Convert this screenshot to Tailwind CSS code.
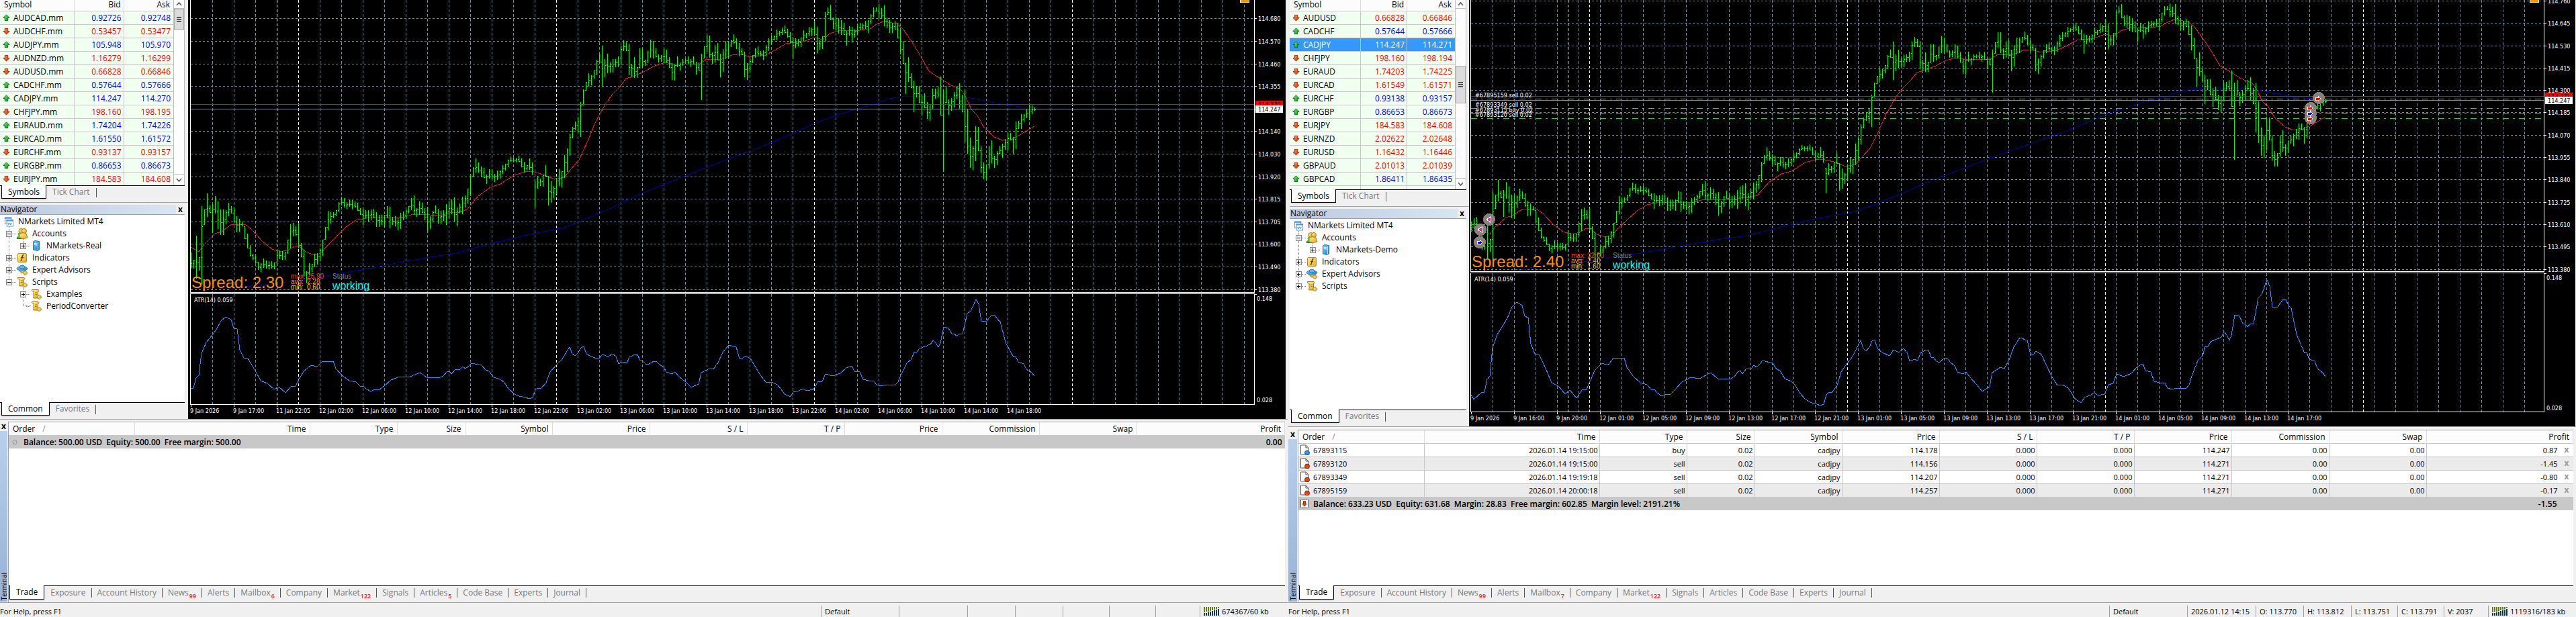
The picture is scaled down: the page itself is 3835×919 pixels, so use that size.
<!DOCTYPE html>
<html lang="en">

<head>
    <meta charset="UTF-8">
    <meta name="viewport" content="width=device-width, initial-scale=1.0">
    <title>NMarkets Limited MT4</title>
    <script src="https://cdn.jsdelivr.net/npm/@tailwindcss/browser@4"></script>
</head>

<body class="bg-[#f0f0f0] text-black text-[12px] leading-[16px] font-['Open_Sans',sans-serif]">
    <!-- Shared icons -->
    <svg class="absolute size-0" aria-hidden="true">
        <defs>
            <linearGradient id="g-up" x1="0" y1="0" x2="1" y2="1"><stop offset="0" stop-color="#7df07d"/><stop offset="1" stop-color="#0a8a1a"/></linearGradient>
            <linearGradient id="g-down" x1="0" y1="0" x2="1" y2="1"><stop offset="0" stop-color="#ff9a6a"/><stop offset="1" stop-color="#c22a00"/></linearGradient>
            <linearGradient id="g-gold" x1="0" y1="0" x2="1" y2="1"><stop offset="0" stop-color="#fff0a0"/><stop offset="1" stop-color="#e0a820"/></linearGradient>
            <linearGradient id="g-blue" x1="0" y1="0" x2="1" y2="1"><stop offset="0" stop-color="#7fd4ff"/><stop offset="1" stop-color="#1078d0"/></linearGradient>
        </defs>
        <symbol id="i-up" viewBox="0 0 12 12"><path d="M6 1 11 6H8.500V10.500H3.500V6H1Z" fill="url(#g-up)" stroke="#0a6a18"/></symbol>
        <symbol id="i-down" viewBox="0 0 12 12"><path d="M6 11 1 6H3.500V1.500H8.500V6H11Z" fill="url(#g-down)" stroke="#9a2600"/></symbol>
        <symbol id="i-root" viewBox="0 0 16 16"><rect x="1.500" y="1.500" width="10" height="10" fill="#fff" stroke="#4a9ae0"/><path d="M1 2.500H12" stroke="#4a9ae0" stroke-width="2"/><path d="M3 7 4.500 5 6 8" fill="none" stroke="#4a7ad0"/><rect x="4.500" y="5.500" width="10" height="10" fill="#fff" stroke="#4a9ae0"/><path d="M4 6.500H15" stroke="#4a9ae0" stroke-width="2"/><path d="M6 10 7.500 13 9 10 10.500 13 12 10" fill="none" stroke="#4a7ad0"/></symbol>
        <symbol id="i-accounts" viewBox="0 0 18 16"><circle cx="5" cy="9" r="2.500" fill="#50d030"/><path d="M1 15.500C1 11 9 11 9 15.500Z" fill="#30c020" stroke="#209010"/><circle cx="7.500" cy="4" r="3.500" fill="url(#g-gold)" stroke="#a87a10"/><circle cx="12" cy="4" r="3.500" fill="url(#g-gold)" stroke="#a87a10"/><path d="M5 14V9Q9 5 15 8L17 14Q11 17 5 14Z" fill="url(#g-gold)" stroke="#a87a10"/></symbol>
        <symbol id="i-server" viewBox="0 0 16 16"><path d="M3.500 2 6 .5 12.500 1.500V14L10 15.500 3.500 14Z" fill="url(#g-blue)" stroke="#1878c8"/><path d="M5 4.500 9 5M5 6.500 9 7" stroke="#fff"/><path d="M10.500 3V15" stroke="#bfe8ff"/></symbol>
        <symbol id="i-indicator" viewBox="0 0 16 16"><rect x="1.500" y="1.500" width="13" height="13" rx="1.500" fill="url(#g-gold)" stroke="#b88a20"/><path d="M10.500 4C8.500 3 8.500 5 8 7.500S7 13 5.500 12M6 7.500H10" fill="none" stroke="#5a4000" stroke-width="1.300"/></symbol>
        <symbol id="i-expert" viewBox="0 0 18 16"><path d="M4 8Q10 14 14 8L15 12 8 13Z" fill="url(#g-gold)" stroke="#b88a20"/><ellipse cx="9" cy="6" rx="8" ry="3" fill="url(#g-blue)" stroke="#2a80b8"/><path d="M5 5Q5 1 9 1T13 5Q9 7 5 5Z" fill="#6ab8e8" stroke="#2a80b8"/><path d="M13.500 9 17 12.500 13.500 16 10 12.500Z" fill="url(#g-gold)" stroke="#a87a10"/></symbol>
        <symbol id="i-script" viewBox="0 0 16 16"><path d="M1.500 1.500H11Q12.500 2.500 11.500 4H10.500V11H12V14H4Q2.500 13 4 11.500V4H2.500Q1 3 1.500 1.500Z" fill="url(#g-gold)" stroke="#a87a10"/><path d="M6 6H9M6 8.500H9" stroke="#a87a10"/><path d="M12.500 9 16 12.500 12.500 16 9 12.500Z" fill="url(#g-gold)" stroke="#a87a10"/></symbol>
        <symbol id="i-buy" viewBox="0 0 14 16"><path d="M.5 1H8L12 5V15H.5Z" fill="#fff" stroke="#555"/><path d="M8 1V5H12" fill="none" stroke="#555"/><circle cx="10" cy="12.500" r="3.500" fill="#2a9ae8" stroke="#1060a0"/></symbol>
        <symbol id="i-sell" viewBox="0 0 14 16"><path d="M.5 1H8L12 5V15H.5Z" fill="#fff" stroke="#555"/><path d="M8 1V5H12" fill="none" stroke="#555"/><circle cx="10" cy="12.500" r="3.500" fill="#e04a18" stroke="#902000"/></symbol>
        <symbol id="i-loss" viewBox="0 0 14 16"><rect x=".5" y="1.500" width="11" height="13" rx="1" fill="#fff" stroke="#555"/><path d="M6 12 3 8.500H4.500V4.500H7.500V8.500H9Z" fill="#e04a18" stroke="#a02a00"/></symbol>
        <symbol id="i-flat" viewBox="0 0 14 16"><circle cx="6" cy="8.500" r="3" fill="#ddd" stroke="#888"/><path d="M4 10.500 8 6.500" stroke="#888"/></symbol>
        <symbol id="i-traffic" viewBox="0 0 23 13"><path d="M0 0h2v8h-2zM3 0h2v7h-2zM6 0h2v7h-2zM9 0h2v6h-2zM12 0h2v5h-2zM15 0h2v4h-2zM18 0h2v3h-2zM21 0h2v2h-2z" fill="#6b7a1a"/><path d="M0 9h2v4h-2zM3 9h2v4h-2zM6 8h2v5h-2zM9 7h2v6h-2zM12 6h2v7h-2zM15 5h2v8h-2zM18 4h2v9h-2zM21 3h2v10h-2z" fill="#123c58"/></symbol>
    </svg>

    <main id="desk" class="flex gap-px h-screen overflow-hidden"></main>

    <script>
        // High/low of every bar as chart offsets, one pair per bar
        const BARS = [
            355,371, 350,366, 347,368, 370,385,
            376,400, 387,400, 351,415, 383,403, 307,423, 312,335, 288,323, 306,317, 304,347, 292,318,
            299,341, 312,350, 312,350, 313,333, 302,322, 307,318, 310,331, 322,346, 326,345, 330,337,
            337,356, 348,370, 365,382, 378,387, 380,392, 390,402, 392,405, 385,399, 388,400, 389,401,
            389,400, 391,401, 371,391, 373,386, 374,387, 375,387, 357,378, 334,370, 332,352, 337,351,
            332,370, 362,383, 372,412, 404,422, 392,410, 393,405, 378,398, 377,394, 370,389, 357,381,
            338,357, 314,343, 316,333, 316,325, 313,322, 301,316, 293,306, 295,309, 301,311, 298,308,
            298,312, 300,310, 302,314, 310,320, 310,335, 313,325, 313,330, 312,328, 311,325, 316,338,
            320,338, 320,335, 320,338, 307,325, 308,340, 323,335, 322,337, 325,343, 317,341, 315,328,
            312,325, 307,318, 295,313, 291,320, 310,323, 300,320, 302,318, 310,328, 308,345, 322,341,
            314,331, 306,318, 311,333, 314,333, 313,329, 304,335, 299,326, 297,319, 294,330, 309,337,
            303,318, 293,319, 291,309, 281,303, 259,292, 249,263, 236,257, 242,257, 248,264, 250,265,
            260,274, 252,266, 252,268, 259,271, 254,268, 254,266, 246,259, 244,254, 238,249, 233,241,
            235,242, 235,242, 232,241, 236,249, 241,257, 246,254, 236,253, 242,260, 269,310, 262,281,
            266,277, 261,278, 246,263, 262,306, 270,302, 277,295, 265,289, 252,277, 255,279, 231,265,
            221,256, 199,232, 189,206, 181,194, 174,197, 152,204, 133,157, 122,135, 109,129, 112,127,
            105,118, 89,112, 80,93, 68,129, 88,115, 80,109, 93,108, 88,108, 88,100, 84,100,
            68,97, 60,76, 63,76, 66,112, 96,114, 85,116, 100,116, 72,102, 72,100, 89,98,
            76,94, 59,86, 61,87, 72,85, 81,93, 82,92, 72,94, 74,94, 85,101, 94,119,
            96,120, 84,100, 93,105, 88,98, 88,94, 84,95, 88,100, 84,96, 92,111, 93,105,
            80,149, 69,87, 52,77, 53,86, 78,95, 67,93, 64,90, 80,115, 73,107, 61,88,
            61,86, 60,70, 51,65, 57,73, 64,84, 72,82, 77,115, 94,119, 88,107, 82,94,
            72,86, 69,83, 76,84, 75,89, 67,84, 57,76, 53,66, 53,60, 44,60, 46,53,
            41,52, 38,50, 43,56, 48,64, 55,87, 57,72, 58,69, 56,70, 45,61, 49,57,
            40,54, 41,53, 31,52, 40,79, 59,74, 54,73, 18,61, 11,22, 7,30, 26,43,
            25,45, 27,50, 30,52, 34,52, 46,68, 39,53, 40,63, 44,56, 35,52, 34,45,
            35,44, 31,43, 30,49, 21,36, 11,26, 11,17, 6,28, 12,28, 8,39, 26,42,
            30,49, 34,49, 31,44, 34,57, 42,81, 61,95, 94,140, 85,122, 109,131, 120,167,
            128,145, 128,153, 142,172, 139,161, 152,177, 155,180, 132,163, 132,147, 129,145, 114,172,
            133,256, 129,153, 148,171, 146,165, 137,160, 129,147, 124,162, 141,167, 134,212, 163,229,
            205,250, 217,253, 188,240, 189,225, 217,257, 242,267, 245,267, 217,251, 209,243, 232,250,
            225,246, 217,230, 214,235, 207,223, 198,224, 198,209, 204,230, 181,222, 180,192, 170,192,
            170,181, 162,176, 156,179, 157,170, 160,165
        ];

        const FAST_MA = [268,362, 284,368, 296,375, 303,365, 320,348, 330,345, 345,334, 365,334, 375,342, 390,359, 405,371, 418,375, 430,372, 440,366, 446,367, 455,375, 468,380, 478,377, 487,366, 500,353, 515,338, 530,328, 545,325, 575,324, 600,324, 615,319, 640,320, 655,321, 670,317, 685,316, 695,312, 712,292, 730,279, 745,274, 765,261, 785,255, 795,256, 812,261, 825,267, 840,264, 850,252, 862,238, 875,210, 885,185, 900,157, 912,140, 922,130, 932,117, 945,113, 960,106, 975,98, 990,93, 1005,96, 1042,95, 1052,88, 1075,88, 1090,82, 1105,80, 1115,85, 1140,82, 1155,74, 1170,65, 1195,62, 1212,56, 1225,59, 1235,50, 1248,46, 1265,45, 1280,45, 1295,43, 1305,36, 1315,32, 1335,35, 1345,44, 1360,66, 1372,86, 1383,106, 1400,117, 1414,126, 1430,133, 1437,143, 1446,163, 1455,172, 1465,190, 1480,204, 1490,208, 1505,208, 1520,200, 1540,188];
        const SLOW_MA = [330,435, 365,427, 405,423, 440,418, 480,412, 520,405, 560,398, 600,390, 640,383, 680,377, 730,363, 780,351, 840,339, 860,331, 905,312, 960,286, 1000,270, 1050,250, 1100,231, 1150,212, 1212,184, 1250,170, 1280,161, 1300,156, 1320,148, 1345,143, 1430,143, 1460,149, 1490,155, 1520,159, 1540,159];
        const ATR = [268,581, 272,587, 284,578, 288,578, 292,563, 296,559, 300,526, 307,510, 313,503, 322,491, 329,478, 336,472, 344,476, 348,489, 353,490, 357,521, 363,533, 369,534, 374,542, 380,552, 388,567, 398,571, 408,580, 415,576, 425,585, 433,576, 440,575, 445,565, 452,553, 463,544, 472,546, 480,538, 496,538, 500,549, 509,559, 520,567, 530,569, 537,576, 541,575, 545,579, 552,583, 558,580, 565,580, 572,575, 582,566, 595,561, 608,562, 625,555, 635,562, 640,562, 653,563, 660,560, 665,554, 669,553, 672,557, 677,551, 685,550, 689,546, 693,549, 698,545, 702,541, 717,544, 723,551, 728,553, 735,562, 745,565, 751,570, 757,579, 766,587, 773,590, 783,592, 788,594, 793,592, 797,581, 801,578, 805,579, 813,570, 819,554, 828,544, 836,536, 843,525, 848,517, 852,527, 856,530, 861,525, 865,518, 869,516, 873,527, 880,531, 891,535, 897,528, 905,531, 912,527, 917,531, 921,542, 928,539, 933,541, 937,532, 945,528, 949,528, 953,537, 957,538, 961,542, 965,543, 973,538, 978,539, 982,543, 988,547, 992,554, 1000,557, 1005,554, 1011,561, 1021,569, 1029,577, 1040,572, 1044,555, 1056,549, 1062,550, 1069,540, 1076,525, 1085,514, 1096,517, 1101,534, 1105,534, 1109,530, 1117,534, 1125,547, 1132,559, 1141,570, 1149,569, 1157,573, 1163,580, 1168,587, 1175,590, 1177,590, 1181,584, 1189,582, 1196,579, 1201,582, 1211,580, 1217,569, 1224,568, 1229,557, 1240,560, 1251,556, 1260,548, 1268,545, 1272,553, 1280,554, 1285,565, 1293,567, 1301,568, 1305,573, 1312,575, 1318,573, 1333,573, 1337,569, 1341,559, 1350,541, 1357,535, 1361,524, 1365,524, 1369,519, 1385,513, 1389,507, 1393,511, 1397,517, 1400,511, 1405,487, 1412,489, 1417,497, 1421,497, 1424,501, 1428,497, 1433,497, 1440,467, 1445,463, 1449,455, 1453,446, 1457,453, 1461,478, 1469,478, 1473,473, 1477,469, 1481,469, 1485,476, 1489,479, 1497,510, 1505,525, 1509,532, 1512,531, 1516,539, 1524,542, 1528,550, 1536,555, 1540,560];

        const GRID = '#778899';
        const icon = (id, cls) => `<svg class="${cls} shrink-0"><use href="#i-${id}"/></svg>`;

        const WINDOWS = [
            {
                sidebar: 'w-[280px]', inset: '', list: 'w-[275px]', rowsHeight: 'h-[276px]', cols: [110, 74, 74],
                thumb: 'h-[32px]', thumbTop: '',
                symbols: [['AUDCAD.mm', '0.92726', '0.92748', 1], ['AUDCHF.mm', '0.53457', '0.53477', 0], ['AUDJPY.mm', '105.948', '105.970', 1], ['AUDNZD.mm', '1.16279', '1.16299', 0], ['AUDUSD.mm', '0.66828', '0.66846', 0], ['CADCHF.mm', '0.57644', '0.57666', 1], ['CADJPY.mm', '114.247', '114.270', 1], ['CHFJPY.mm', '198.160', '198.195', 0], ['EURAUD.mm', '1.74204', '1.74226', 1], ['EURCAD.mm', '1.61550', '1.61572', 1], ['EURCHF.mm', '0.93137', '0.93157', 0], ['EURGBP.mm', '0.86653', '0.86673', 1], ['EURJPY.mm', '184.583', '184.608', 0]],
                tree: [[1, '-', 'accounts', 'Accounts'], [2, '+', 'server', 'NMarkets-Real'], [1, '+', 'indicator', 'Indicators'], [1, '+', 'expert', 'Expert Advisors'], [1, '-', 'script', 'Scripts'], [2, '+', 'script', 'Examples'], [2, '', 'script', 'PeriodConverter']],
                branches: '<span class="absolute left-[34px] top-[36px] h-[10px] border-l border-dotted border-[#888]"></span><span class="absolute left-[34px] top-[108px] h-[28px] w-[12px] border-l border-b border-dotted border-[#888]"></span>',
                chartPad: 'pl-[3px] mr-[3px]', atrHeight: 'h-[166px]', panelGap: 'h-[4px]',
                shift: 0, priceMap: y => y, atrMap: y => y - 438, gridX: 32, ask: 155, bid: 162,
                levels: [[27, '114.680'], [61, '114.570'], [95, '114.460'], [128, '114.355'], [162, ''], [195, '114.140'], [229, '114.030'], [263, '113.920'], [296, '113.815'], [330, '113.705'], [363, '113.600'], [397, '113.490'], [431, '113.380']],
                askText: '114.270', bidText: '114.247', atrLabels: [7, 157],
                times: ['9 Jan 2026', '9 Jan 17:00', '11 Jan 22:05', '12 Jan 02:00', '12 Jan 06:00', '12 Jan 10:00', '12 Jan 14:00', '12 Jan 18:00', '12 Jan 22:06', '13 Jan 02:00', '13 Jan 06:00', '13 Jan 10:00', '13 Jan 14:00', '13 Jan 18:00', '13 Jan 22:06', '14 Jan 02:00', '14 Jan 06:00', '14 Jan 10:00', '14 Jan 14:00', '14 Jan 18:00'],
                spread: '2.30', stats: ['25.90', '2.28', '0.60'],
                orders: [], trades: [],
                terminal: 'h-[269px]', strip: 'w-[11px]',
                summary: ['flat', 'Balance: 500.00 USD  Equity: 500.00  Free margin: 500.00', '0.00', 'pr-[4px]'],
                tabs: ['Trade', 'Exposure', 'Account History', 'News|99', 'Alerts', 'Mailbox|6', 'Company', 'Market|122', 'Signals', 'Articles|5', 'Code Base', 'Experts', 'Journal'],
                status: ['Default', '', '', '', '', '', ''], traffic: '674367/60 kb'
            },
            {
                sidebar: 'w-[269px]', inset: 'pl-[2px]', list: 'w-[263px]', rowsHeight: 'h-[282px]', cols: [105, 69, 71],
                thumb: 'h-[56px]', thumbTop: 'mt-[85px]',
                symbols: [['AUDUSD', '0.66828', '0.66846', 0], ['CADCHF', '0.57644', '0.57666', 1], ['CADJPY', '114.247', '114.271', 1, true], ['CHFJPY', '198.160', '198.194', 0], ['EURAUD', '1.74203', '1.74225', 0], ['EURCAD', '1.61549', '1.61571', 0], ['EURCHF', '0.93138', '0.93157', 1], ['EURGBP', '0.86653', '0.86673', 1], ['EURJPY', '184.583', '184.608', 0], ['EURNZD', '2.02622', '2.02648', 0], ['EURUSD', '1.16432', '1.16446', 0], ['GBPAUD', '2.01013', '2.01039', 0], ['GBPCAD', '1.86411', '1.86435', 1], ['GBPCHF', '1.07470', '1.07495', 0]],
                tree: [[1, '-', 'accounts', 'Accounts'], [2, '+', 'server', 'NMarkets-Demo'], [1, '+', 'indicator', 'Indicators'], [1, '+', 'expert', 'Expert Advisors'], [1, '+', 'script', 'Scripts']],
                branches: '<span class="absolute left-[34px] top-[36px] h-[10px] border-l border-dotted border-[#888]"></span>',
                chartPad: 'pl-[2px] mr-px', atrHeight: 'h-[208px]', panelGap: 'h-[5px]',
                shift: 16, priceMap: y => Math.round(y * 0.9327 - 1), atrMap: y => Math.round(10 + (y - 446) * 1.265), gridX: 32, ask: 143, bid: 149,
                levels: [[1, '114.760'], [34, '114.645'], [68, '114.530'], [101, '114.415'], [134, '114.300'], [167, '114.185'], [201, '114.070'], [234, '113.955'], [267, '113.840'], [301, '113.725'], [334, '113.610'], [367, '113.495'], [401, '113.380']],
                askText: '114.271', bidText: '114.247', atrLabels: [7, 200],
                times: ['9 Jan 2026', '9 Jan 16:00', '9 Jan 20:00', '12 Jan 01:00', '12 Jan 05:00', '12 Jan 09:00', '12 Jan 13:00', '12 Jan 17:00', '12 Jan 21:00', '13 Jan 01:00', '13 Jan 05:00', '13 Jan 09:00', '13 Jan 13:00', '13 Jan 17:00', '13 Jan 21:00', '14 Jan 01:00', '14 Jan 05:00', '14 Jan 09:00', '14 Jan 13:00', '14 Jan 17:00'],
                spread: '2.40', stats: ['32.50', '2.40', '1.60'],
                orders: [[147, '#67895159 sell 0.02'], [161, '#67893349 sell 0.02'], [169, '#67893115 buy 0.02'], [176, '#67893120 sell 0.02']],
                trades: [['67893115', '2026.01.14 19:15:00', 'buy', '114.178', '114.247', '0.87'], ['67893120', '2026.01.14 19:15:00', 'sell', '114.156', '114.271', '-1.45'], ['67893349', '2026.01.14 19:19:18', 'sell', '114.207', '114.271', '-0.80'], ['67895159', '2026.01.14 20:00:18', 'sell', '114.257', '114.271', '-0.17']],
                terminal: 'h-[257px]', strip: 'w-[13px]',
                summary: ['loss', 'Balance: 633.23 USD  Equity: 631.68  Margin: 28.83  Free margin: 602.85  Margin level: 2191.21%', '-1.55', 'pr-[24px]'],
                tabs: ['Trade', 'Exposure', 'Account History', 'News|99', 'Alerts', 'Mailbox|7', 'Company', 'Market|122', 'Signals', 'Articles', 'Code Base', 'Experts', 'Journal'],
                status: ['Default', '2026.01.12 14:15', 'O: 113.770', 'H: 113.812', 'L: 113.751', 'C: 113.791', 'V: 2037'], traffic: '1119316/183 kb'
            }
        ];

        const DAYS = [128, 160, 544, 928, 1312]; // session separators

        function verticals(w, h) {
            let d = '';
            for (let k = 0; k < 49; k++) {
                const x = w.gridX + 32 * k;
                if (!DAYS.some(day => day + w.shift === x)) d += `M${x}.5 0V${h}`;
            }
            return `<path d="${d}" stroke="${GRID}" stroke-dasharray="4 3"/>
                <path d="${DAYS.map(x => `M${x + w.shift}.5 0V${h}`).join('')}" stroke="#fff" stroke-dasharray="4 3"/>`;
        }

        function line(points, w, map, color) {
            const out = [];
            for (let i = 0; i < points.length; i += 2) {
                out.push(`${points[i] - 284 + w.shift},${map(points[i + 1])}`);
            }
            return `<polyline points="${out.join(' ')}" fill="none" stroke="${color}"/>`;
        }

        function bars(w) {
            const n = BARS.length / 2;
            const mid = i => (BARS[2 * i] + BARS[2 * i + 1]) / 2;
            let d = '', prev = null;
            for (let i = 0; i < n; i++) {
                const x = 4 * (i - 4) + w.shift;
                const hi = w.priceMap(BARS[2 * i]), lo = w.priceMap(BARS[2 * i + 1]);
                const next = i < n - 1 ? (mid(i) + 2 * mid(i + 1)) / 3 : mid(i);
                const close = Math.min(lo - 1, Math.max(hi, Math.round(w.priceMap(next))));
                const open = prev === null ? close : Math.min(lo - 1, Math.max(hi, prev));
                d += `M${x}.5 ${hi}V${lo}M${x - 1} ${open}.5H${x}M${x + 1} ${close}.5H${x + 2}`;
                prev = close;
            }
            return `<path d="${d}" fill="none" stroke="#00ff00"/>`;
        }

        function markers() {
            const disc = (x, y) => `<circle cx="${x}" cy="${y}" r="9" fill="#8c8078"/>`;
            const left = (x, y) => `<path d="M${x - 4} ${y} ${x + 2} ${y - 4}V${y + 4}Z" fill="#ff1493" stroke="#fff"/>`;
            const right = (x, y, c) => `<path d="M${x - 4} ${y - 2}H${x}V${y - 4}L${x + 4} ${y} ${x} ${y + 4}V${y + 2}H${x - 4}Z" fill="${c}" stroke="#fff"/>`;
            return `<path d="M0 334 20 328M14 361 26 328" stroke="#00f" stroke-dasharray="4 3"/>
                <path d="M0 337 14 343M0 344 14 342" stroke="#f00" stroke-dasharray="3 3"/>
                ${disc(27, 327)}${disc(14, 342)}${disc(13, 361)}
                ${left(27, 327)}${left(14, 342)}${right(13, 361, '#00f')}
                ${disc(1262, 146)}${disc(1250, 161)}${disc(1250, 169)}${disc(1250, 176)}
                ${right(1261, 147, '#f00')}${right(1249, 161, '#f00')}${right(1249, 169, '#00f')}${right(1249, 177, '#f00')}`;
        }

        function priceSvg(w) {
            return `<svg class="absolute inset-0 w-full h-full text-[9px]" shape-rendering="crispEdges">
                ${verticals(w, 440)}
                <path d="${w.levels.map(l => `M0 ${l[0]}.5H9999`).join('')}" stroke="${GRID}" stroke-dasharray="3 3"/>
                ${line(SLOW_MA, w, w.priceMap, '#0000a0')}
                ${line(FAST_MA, w, w.priceMap, '#dc143c')}
                ${bars(w)}
                <path d="M0 ${w.ask}.5H9999" stroke="#f00"/>
                <path d="${w.orders.map(o => `M0 ${o[0]}.5H1594`).join('')}" stroke="#32cd32" stroke-dasharray="9 6 3 6"/>
                <path d="M0 ${w.bid}.5H9999" stroke="${GRID}"/>
                ${w.orders.length ? markers() : ''}
                ${w.orders.map(o => `<text x="6" y="${o[0] - 2}" fill="#fff">${o[1]}</text>`).join('')}
            </svg>`;
        }

        function chart(w) {
            return `
            <section class="flex-1 min-w-0 flex flex-col bg-black text-white font-['DejaVu_Sans_Condensed','Open_Sans',sans-serif] ${w.chartPad}">
                <div class="flex flex-1 min-h-0 mb-px">
                    <div class="relative flex-1 overflow-hidden border-l border-r border-b border-white">
                        ${priceSvg(w)}
                        <span class="absolute right-[7px] top-0 w-[14px] h-[4px] bg-[#ff9800] border-x border-b border-white"></span>
                        <div class="absolute left-px bottom-0 flex items-end font-['Liberation_Sans',sans-serif]">
                            <span class="text-[24px] leading-[27px] w-[148px] whitespace-nowrap pb-px text-[#ff8c00]">Spread: ${w.spread}</span>
                            <div class="grid grid-cols-[24px_38px] text-[10px] leading-[8px] pb-[3px]">
                                <span class="text-[#ff4500]">max:</span><span class="text-[#ff4500]">${w.stats[0]}</span>
                                <span class="text-[#ff8c00]">avg:</span><span class="text-[#ff8c00]">${w.stats[1]}</span>
                                <span class="text-[#e8d800]">min:</span><span class="text-[#e8d800]">${w.stats[2]}</span>
                            </div>
                            <div class="flex flex-col pb-px">
                                <span class="text-[10px] leading-[10px] text-[#808080]">Status</span>
                                <span class="text-[16px] leading-[17px] text-[#00ffff]">working</span>
                            </div>
                        </div>
                    </div>
                    <svg class="w-[46px] h-full text-[9px] shrink-0" shape-rendering="crispEdges">
                        ${w.levels.map(l => `<path d="M0 ${l[0]}.5H3" stroke="#fff"/><text x="5" y="${l[0] + 4}" fill="#fff">${l[1]}</text>`).join('')}
                        <path d="M1 ${w.ask - 5}H42V${w.ask + 6}H1Z" fill="#f00"/><text x="5" y="${w.ask + 4}" fill="#000">${w.askText}</text>
                        <path d="M1 ${w.bid - 5}H42V${w.bid + 6}H1Z" fill="#fff"/><text x="5" y="${w.bid + 4}" fill="#000">${w.bidText}</text>
                    </svg>
                </div>
                <div class="flex shrink-0 ${w.atrHeight}">
                    <div class="relative flex-1 overflow-hidden border border-white">
                        <svg class="absolute inset-0 w-full h-full" shape-rendering="crispEdges">
                            ${verticals(w, 300)}
                            ${line(ATR, w, w.atrMap, '#1e90ff')}
                        </svg>
                        <span class="absolute left-[5px] top-[3px] text-[9px] leading-[12px]">ATR(14) 0.059</span>
                    </div>
                    <svg class="w-[46px] h-full text-[9px] shrink-0">
                        <path d="M0 1.500H3" stroke="#fff"/>
                        <text x="3" y="${w.atrLabels[0] + 4}" fill="#fff">0.148</text>
                        <text x="3" y="${w.atrLabels[1] + 5}" fill="#fff">0.028</text>
                    </svg>
                </div>
                <div class="flex h-[21px] shrink-0 text-[9px] leading-[12px]">
                    ${w.times.map(t => `<span class="w-[64px] shrink-0 pt-[3px] relative whitespace-nowrap before:absolute before:left-px before:top-0 before:h-[3px] before:w-px before:bg-white">${t}</span>`).join('')}
                </div>
            </section>`;
        }

        function pageTabs(active, other) {
            return `
            <div class="flex items-start h-[25px] pl-[2px] border-t border-black">
                <button class="-mt-px h-[20px] px-[9px] bg-white border-x border-b border-black shadow">${active}</button>
                <button class="h-[18px] mx-[9px] text-[#787878]">${other}</button>
                <span class="h-[14px] mt-[3px] border-l border-[#555]"></span>
            </div>`;
        }

        function marketWatch(w) {
            const rows = w.symbols.map(([name, bid, ask, up, selected]) => {
                const tone = selected ? 'text-white' : up ? 'text-[#0000ff]' : 'text-[#ff0000]';
                return `<tr class="h-[20px] border-b border-[#c8c8c8] ${selected ? 'bg-[#3399ff] text-white' : 'bg-[#f0fff0]'}">
                    <td class="pl-[4px] border-r border-[#c8c8c8]"><span class="flex items-center gap-[5px]">${icon(up ? 'up' : 'down', 'size-[11px]')}${name}</span></td>
                    <td class="pr-[3px] text-right border-r border-[#c8c8c8] ${tone}">${bid}</td>
                    <td class="pr-[4px] text-right ${tone}">${ask}</td>
                </tr>`;
            }).join('');
            return `
            <section class="${w.list}">
                <div class="flex overflow-hidden ${w.rowsHeight}">
                    <table class="table-fixed border-collapse w-full self-start leading-[15px]">
                        <colgroup>${w.cols.map(c => `<col style="width:${c}px">`).join('')}</colgroup>
                        <thead><tr class="h-[16px] bg-[#fcfcfc] border-b border-[#c8c8c8] leading-[14px]">
                            <th class="pl-[6px] pb-px font-normal text-left border-r border-[#ddd]">Symbol</th>
                            <th class="pr-[4px] pb-px font-normal text-right border-r border-[#ddd]">Bid</th>
                            <th class="pr-[5px] pb-px font-normal text-right">Ask</th>
                        </tr></thead>
                        <tbody>${rows}</tbody>
                    </table>
                    <div class="w-[17px] shrink-0 flex flex-col bg-[#fdfdfd] border-x border-[#c0c0c0]">
                        <button aria-label="Scroll up" class="h-[13px] shrink-0 border-b border-[#c0c0c0] flex justify-center"><svg class="w-[9px] h-[10px]"><path d="M1 8 4.500 4 8 8" fill="none" stroke="#555" stroke-width="1.500"/></svg></button>
                        <div class="${w.thumb} ${w.thumbTop} shrink-0 bg-[#dcdcdc] border border-[#aaa] flex items-center justify-center"><svg class="w-[7px] h-[8px]" shape-rendering="crispEdges"><path d="M0 1H7M0 4H7M0 7H7" stroke="#555" stroke-width="2"/></svg></div>
                        <button aria-label="Scroll down" class="h-[17px] mt-auto shrink-0 border-t border-[#c0c0c0] flex items-center justify-center"><svg class="w-[9px] h-[8px]"><path d="M1 2 4.500 6 8 2" fill="none" stroke="#555" stroke-width="1.500"/></svg></button>
                    </div>
                </div>
                ${pageTabs('Symbols', 'Tick Chart')}
            </section>`;
        }

        function navigatorPanel(w) {
            const rows = w.tree.map(([level, box, id, label]) => `
                <li class="h-[18px] flex items-center ${level === 1 ? 'pl-[9px]' : 'pl-[30px]'}">
                    ${box ? `<button class="size-[9px] bg-[#eee] border border-[#888] relative z-10 flex items-center justify-center" aria-label="Toggle ${label}"><svg class="size-[5px]" shape-rendering="crispEdges"><path d="M0 2.500H5${box === '+' ? 'M2.500 0V5' : ''}" stroke="#000"/></svg></button>` : '<span class="w-[9px]"></span>'}
                    <span class="w-[6px] border-t border-dotted border-[#888]"></span>
                    ${icon(id, 'w-[18px] h-[16px]')}
                    <span class="pl-[6px] whitespace-nowrap">${label}</span>
                </li>`).join('');
            return `
            <section class="flex-1 min-h-0 flex flex-col border-t border-[#a0a0a0] pt-[2px]">
                <header class="flex h-[15px] items-center ${w.list}">
                    <h2 class="flex-1 leading-[14px] pl-px bg-linear-to-r from-[#bccadf] to-[#d8e5f3]">Navigator</h2>
                    <button class="w-[13px] text-center font-bold leading-[12px]">x</button>
                </header>
                <div class="flex-1 min-h-0 bg-white border-t border-[#a0a0a0] relative pt-px ${w.list}">
                    <span class="absolute left-[13px] top-[18px] h-[82px] border-l border-dotted border-[#888]"></span>
                    ${w.branches}
                    <div class="flex items-center h-[18px] pl-[6px]">${icon('root', 'w-[15px] h-[16px]')}<span class="pl-[6px]">NMarkets Limited MT4</span></div>
                    <ul>${rows}</ul>
                </div>
                <div class="${w.list}">${pageTabs('Common', 'Favorites')}</div>
            </section>`;
        }

        function terminal(w) {
            const heads = ['Time', 'Type', 'Size', 'Symbol', 'Price', 'S / L', 'T / P', 'Price', 'Commission', 'Swap', 'Profit'];
            const widths = [187, 261, 130, 101, 130, 145, 145, 145, 145, 145, 145];
            const rows = w.trades.map(([id, time, type, open, now, profit], i) => {
                const cells = [time, type, '0.02', 'cadjpy', open, '0.000', '0.000', now, '0.00', '0.00'];
                return `<tr class="h-[20px] text-[11px] border-b border-[#c8c8c8] ${i % 2 ? 'bg-[#ebebeb]' : 'bg-white'}">
                    <td class="pl-[3px] border-r border-[#c8c8c8]"><span class="flex items-center gap-[5px]">${icon(type, 'w-[14px] h-[16px]')}${id}</span></td>
                    ${cells.map(c => `<td class="pr-[2px] text-right border-r border-[#c8c8c8]">${c}</td>`).join('')}
                    <td class="pr-[6px]"><span class="flex justify-end gap-[10px]">${profit}<button class="text-[12px] text-[#999] font-bold leading-[14px]" aria-label="Close order ${id}">x</button></span></td>
                </tr>`;
            }).join('');
            const tabs = w.tabs.map((t, i) => {
                const [name, count] = t.split('|');
                if (i === 0) return `<button class="-mt-px mr-[9px] h-[21px] px-[9px] bg-white border-x border-b border-black shadow">${name}</button>`;
                return `<button class="h-[20px] pr-[8px] text-[#787878] flex items-center">${name}${count ? `<sub class="self-end text-[9px] leading-[11px] bottom-0 pl-px font-semibold text-[#ff2020]">${count}</sub>` : ''}</button><span class="h-[14px] mt-[3px] mr-[8px] border-l border-[#555]"></span>`;
            }).join('');
            return `
            <section class="flex shrink-0 ${w.terminal}">
                <div class="${w.strip} shrink-0 flex flex-col items-center pb-px overflow-hidden">
                    <button class="h-[14px] font-bold leading-[12px]">x</button>
                    <div class="flex-1 w-full bg-linear-to-b from-[#b8d0ec] to-[#98b2d4] flex items-end justify-center pb-[2px]">
                        <h2 class="text-[10px] leading-[12px] [writing-mode:vertical-rl] rotate-180">Terminal</h2>
                    </div>
                </div>
                <div class="flex-1 min-w-0 ml-px mr-[4px] flex flex-col border-t border-l border-[#a0a0a0]">
                    <div class="flex-1 min-h-0 bg-white">
                        <table class="table-fixed border-collapse w-full leading-[15px]">
                            <colgroup>${widths.map(c => `<col style="width:${c}px">`).join('')}<col></colgroup>
                            <thead><tr class="h-[19px] bg-[#fcfcfc] border-b border-[#c8c8c8]">
                                <th class="pl-[6px] font-normal text-left border-r border-[#ddd]">Order <span class="pl-[8px] text-[#888]">/</span></th>
                                ${heads.map(h => `<th class="pr-[5px] font-normal text-right border-r border-[#ddd]">${h}</th>`).join('')}
                            </tr></thead>
                            <tbody>${rows}
                                <tr class="h-[20px] bg-[#c8c8c8] font-semibold">
                                    <td colspan="11" class="pl-[3px]"><span class="flex items-center gap-[5px] whitespace-pre">${icon(w.summary[0], 'w-[14px] h-[16px]')}${w.summary[1]}</span></td>
                                    <td class="${w.summary[3]} text-right">${w.summary[2]}</td>
                                </tr>
                            </tbody>
                        </table>
                    </div>
                    <nav class="flex items-start h-[25px] pl-px border-t border-black">${tabs}</nav>
                </div>
            </section>`;
        }

        function statusBar(w) {
            const widths = ['w-[116px]', 'w-[102px]', 'w-[71px]', 'w-[71px]', 'w-[69px]', 'w-[69px]', 'w-[66px]'];
            return `
            <footer class="flex h-[22px] shrink-0 border-t border-[#a0a0a0] pt-[4px] text-[11px] leading-[18px]">
                <span class="flex-1">For Help, press F1</span>
                ${w.status.map((s, i) => `<span class="${widths[i]} pl-[5px] border-l border-[#a0a0a0] whitespace-nowrap">${s}</span>`).join('')}
                <span class="w-[131px] pl-[5px] border-l border-[#a0a0a0] whitespace-nowrap flex items-center gap-[4px]">${icon('traffic', 'w-[23px] h-[13px]')}${w.traffic}</span>
            </footer>`;
        }

        document.getElementById('desk').innerHTML = WINDOWS.map(w => `
            <article class="flex-1 min-w-0 flex flex-col overflow-hidden">
                <div class="flex flex-1 min-h-0">
                    <aside class="shrink-0 flex flex-col ${w.sidebar} ${w.inset}">
                        ${marketWatch(w)}
                        ${navigatorPanel(w)}
                    </aside>
                    ${chart(w)}
                </div>
                <div class="${w.panelGap} shrink-0 border-t border-[#a0a0a0] bg-[#f4f4f4]"></div>
                ${terminal(w)}
                ${statusBar(w)}
            </article>`).join('');
    </script>
</body>

</html>
